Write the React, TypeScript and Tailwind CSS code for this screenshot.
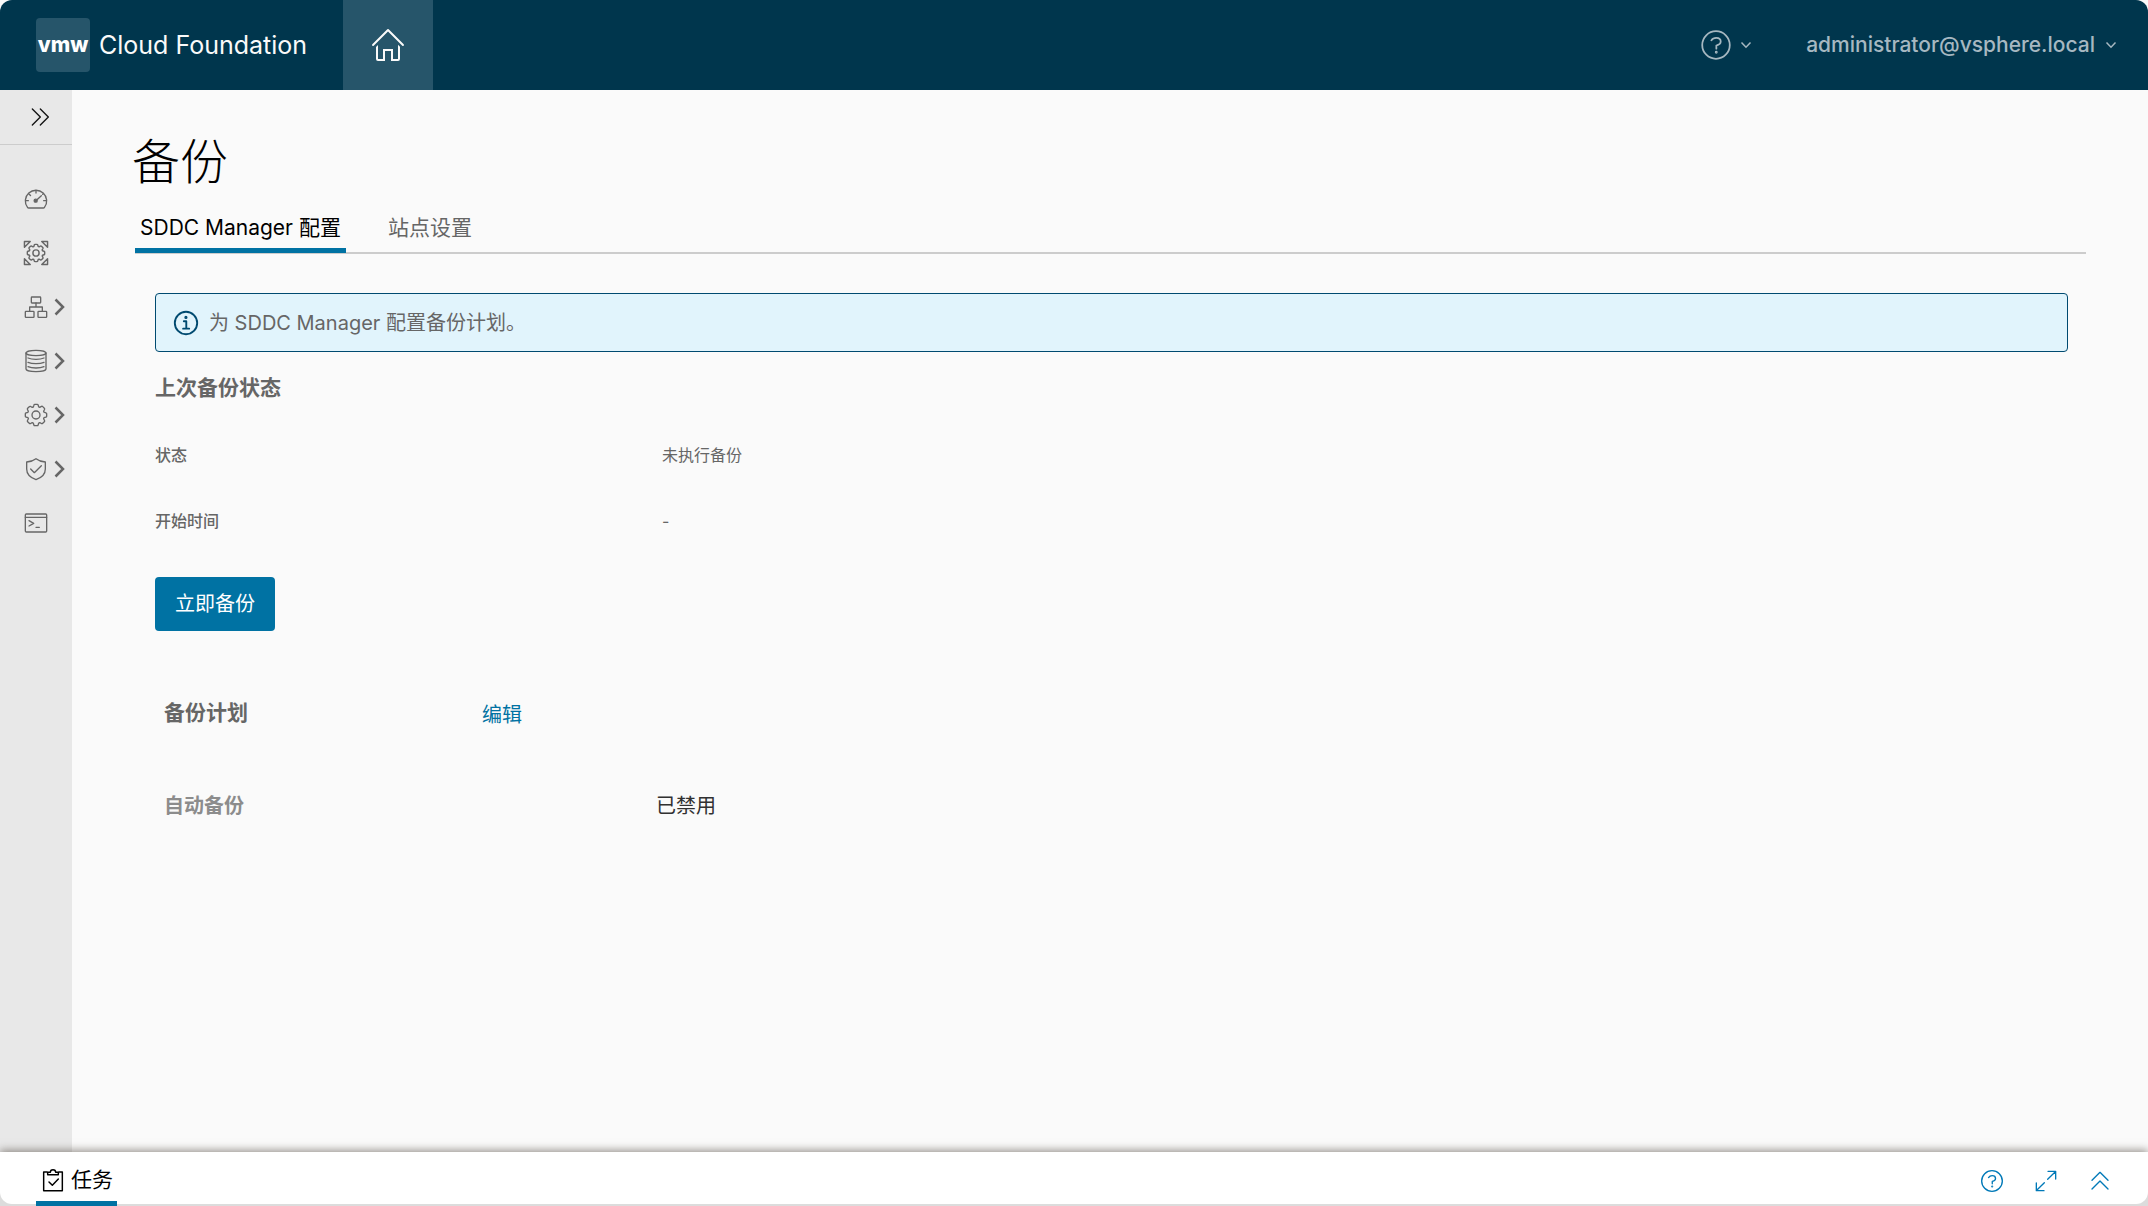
import { ReactNode } from "react"

interface IconProps {
  className?: string
  strokeWidth?: number
  children: ReactNode
}

const Icon = ({ className = "h-6 w-6", strokeWidth = 2, children }: IconProps) => (
  <svg
    viewBox="0 0 36 36"
    className={`shrink-0 ${className}`}
    fill="none"
    stroke="currentColor"
    strokeWidth={strokeWidth}
    strokeLinecap="round"
    strokeLinejoin="round"
    aria-hidden="true"
  >
    {children}
  </svg>
)

const COG_PATH =
  "M32.8,14.7L30,13.8l-0.6-1.5l1.4-2.6c0.3-0.6,0.2-1.4-0.3-1.9l-2.4-2.4c-0.5-0.5-1.3-0.6-1.9-0.3l-2.6,1.4l-1.5-0.6l-0.9-2.8C21,2.5,20.4,2,19.7,2h-3.4c-0.7,0-1.3,0.5-1.4,1.2L14,6c-0.6,0.1-1.1,0.3-1.6,0.6L9.8,5.2C9.2,4.9,8.4,5,7.9,5.5L5.5,7.9C5,8.4,4.9,9.2,5.2,9.8l1.3,2.5c-0.2,0.5-0.4,1.1-0.6,1.6l-2.8,0.9C2.5,15,2,15.6,2,16.3v3.4c0,0.7,0.5,1.3,1.2,1.5L6,22.1l0.6,1.5l-1.4,2.6c-0.3,0.6-0.2,1.4,0.3,1.9l2.4,2.4c0.5,0.5,1.3,0.6,1.9,0.3l2.6-1.4l1.5,0.6l0.9,2.9c0.2,0.6,0.8,1.1,1.5,1.1h3.4c0.7,0,1.3-0.5,1.5-1.1l0.9-2.9l1.5-0.6l2.6,1.4c0.6,0.3,1.4,0.2,1.9-0.3l2.4-2.4c0.5-0.5,0.6-1.3,0.3-1.9l-1.4-2.6l0.6-1.5l2.9-0.9c0.6-0.2,1.1-0.8,1.1-1.5v-3.4C34,15.6,33.5,14.9,32.8,14.7z"

const HomeIcon = () => (
  <svg viewBox="0 0 36 36" className="h-9 w-9" fill="currentColor" aria-hidden="true">
    <path d="M33.71,17.29l-15-15a1,1,0,0,0-1.41,0l-15,15a1,1,0,0,0,1.41,1.41L18,4.41,32.29,18.71a1,1,0,0,0,1.41-1.41Z" />
    <path d="M28,32h-5V22H13V32H8V18L6,20V32a2,2,0,0,0,2,2h7V24h6V34h7a2,2,0,0,0,2-2V19.76l-2-2Z" />
  </svg>
)

const HelpIcon = ({ className }: { className?: string }) => (
  <Icon className={className}>
    <circle cx="18" cy="18" r="15.5" />
    <path d="M12.8 12.8C14 11 16 10 18.3 10c2.9 0 5 1.6 5 4.2 0 2.9-2.4 3.9-4.9 4.5v3.4" />
    <circle cx="18.3" cy="26.2" r="0.6" fill="currentColor" />
  </Icon>
)

const InfoIcon = () => (
  <Icon className="h-[26px] w-[26px]" strokeWidth={2.6}>
    <circle cx="18" cy="18" r="15.5" />
    <path d="M15 15.5h3.4v10M14 25.8h8.4" />
    <circle cx="17.9" cy="10.3" r="0.9" fill="currentColor" />
  </Icon>
)

const CaretDown = () => (
  <svg viewBox="0 0 12 8" className="h-2 w-3" fill="none" stroke="currentColor" strokeWidth="1.5" aria-hidden="true">
    <path d="M1.5 1.5 6 6.2l4.5-4.7" />
  </svg>
)

const DashboardIcon = () => (
  <Icon>
    <path d="M7 31.5h22a2 2 0 0 0 1.7-.9A16 16 0 1 0 5.3 30.6a2 2 0 0 0 1.7.9Z" />
    <path d="M18 5v4M2.5 20.5h4M29.5 20.5h4M7 10l2.8 2.8M29 10l-1 1" />
    <path d="m19.5 19 6.5-6" />
    <circle cx="17.5" cy="20.5" r="2.3" fill="currentColor" />
  </Icon>
)

const PoolIcon = () => (
  <Icon className="h-[26px] w-[26px]" strokeWidth={2}>
    <g transform="translate(4.5 4.5) scale(0.75)">
      <path d={COG_PATH} strokeWidth={2.6} />
    </g>
    <circle cx="18" cy="18" r="4.3" />
    <path d="M2 10V2h8ZM26 2h8v8ZM34 26v8h-8ZM10 34H2v-8Z" />
  </Icon>
)

const NetworkIcon = () => (
  <Icon>
    <rect x="11" y="3" width="14" height="9" rx="1" />
    <rect x="2" y="24.5" width="13" height="9" rx="1" />
    <rect x="21" y="24.5" width="13" height="9" rx="1" />
    <path d="M18 12v6M8.5 24v-6h19v6" />
  </Icon>
)

const StorageIcon = () => (
  <Icon>
    <ellipse cx="18" cy="6" rx="15" ry="4" />
    <path d="M3 6v24c0 2 6 4 15 4s15-2 15-4V6" />
    <path d="M6 13.5c3 1.3 7 2 12 2s9-.7 12-2M6 20c3 1.3 7 2 12 2s9-.7 12-2M6 26.500c3 1.3 7 2 12 2s9-.7 12-2" />
  </Icon>
)

const CogIcon = () => (
  <Icon>
    <path d={COG_PATH} />
    <circle cx="18" cy="18" r="6" />
  </Icon>
)

const ShieldIcon = () => (
  <Icon>
    <path d="M18 2.5c3.5 2.7 8 4.5 14 5V18c0 7.5-5.5 13-14 16C9.5 31 4 25.5 4 18V7.5c6-.5 10.500-2.3 14-5Z" />
    <path d="m10 18 5.500 5.500L26 13" />
  </Icon>
)

const TerminalIcon = () => (
  <Icon>
    <rect x="2" y="4.5" width="32" height="27" rx="1.5" />
    <path d="M2 9.5h32M7.5 14.5l7 4-7 4M18 24.5h5" />
  </Icon>
)

const TaskIcon = () => (
  <Icon strokeWidth={2.2}>
    <path d="M9 6H4v28h28V6h-5" />
    <path d="M10 10V6.5h4a4 4 0 0 1 8 0h4V10Z" />
    <path d="m12 21 5 5 9-9.5" />
  </Icon>
)

const navItems = [
  { label: "仪表板", icon: <DashboardIcon />, expandable: false },
  { label: "解决方案", icon: <PoolIcon />, expandable: false },
  { label: "清单", icon: <NetworkIcon />, expandable: true },
  { label: "存储", icon: <StorageIcon />, expandable: true },
  { label: "管理", icon: <CogIcon />, expandable: true },
  { label: "安全", icon: <ShieldIcon />, expandable: true },
  { label: "开发人员中心", icon: <TerminalIcon />, expandable: false },
]

const statusRows = [
  { label: "状态", value: "未执行备份" },
  { label: "开始时间", value: "-" },
]

const Header = () => (
  <header className="flex h-[90px] items-center rounded-t-xl bg-[#00364d] text-[#fafafa]">
    <a href="#" className="flex items-center gap-[9px] pl-9">
      <span className="flex h-[54px] w-[54px] items-center justify-center rounded bg-[#26556a] text-[21px] leading-6 font-extrabold text-white">
        vmw
      </span>
      <span className="text-[25px] leading-8">Cloud Foundation</span>
    </a>
    <a href="#" aria-label="主页" className="ml-9 flex h-full w-[90px] items-center justify-center bg-[#26556a]">
      <HomeIcon />
    </a>
    <div className="ml-auto flex items-center gap-[54px] pr-[31px] text-[#a6b8c1]">
      <button aria-label="帮助" className="flex items-center gap-2">
        <HelpIcon className="h-8 w-8" />
        <CaretDown />
      </button>
      <button className="flex items-center gap-2.5 text-[21px] leading-8 font-medium">
        administrator@vsphere.local
        <CaretDown />
      </button>
    </div>
  </header>
)

const Sidebar = () => (
  <nav className="w-[72px] shrink-0 bg-[#e8e8e8] text-[#666]">
    <button aria-label="展开" className="flex h-[55px] w-full items-center border-b border-[#ccc] pl-[29px] text-[#111]">
      <Icon>
        <path d="m5 6 12 12L5 30M17 6l12 12-12 12" />
      </Icon>
    </button>
    <ul className="pt-[27px]">
      {navItems.map((item) => (
        <li key={item.label}>
          <a href="#" aria-label={item.label} className="flex h-[54px] items-center pl-[23px]">
            <span className="flex w-[26px] justify-center">{item.icon}</span>
            {item.expandable && (
              <svg viewBox="0 0 12 18" className="ml-[5px] h-[18px] w-3" fill="none" stroke="currentColor" strokeWidth="2.5" aria-hidden="true">
                <path d="m1.5 1.5 7.5 7.5-7.5 7.5" />
              </svg>
            )}
          </a>
        </li>
      ))}
    </ul>
  </nav>
)

const Footer = () => (
  <footer className="relative bg-[#dcdcdc] pb-[2px] shadow-[0_-2px_8px_rgba(60,50,40,0.5)]">
    <div className="flex h-[52px] items-center justify-between rounded-b-xl bg-white px-9">
      <button className="relative flex h-full items-center gap-1.5 pt-1 pr-1 pl-[5px] text-[21px] leading-8 text-black">
        <TaskIcon />
        任务
        <span className="absolute inset-x-0 -bottom-[2px] h-[5px] bg-[#0072a3]" />
      </button>
      <div className="flex items-center gap-[30px] pt-[5px] text-[#0079b8]">
        <button aria-label="帮助">
          <HelpIcon className="h-6 w-6" />
        </button>
        <button aria-label="最大化">
          <Icon>
            <path d="M21 3.5h11.500V15M32 4 20.5 15.5M15 32.5H3.5V21M4 32l11.5-11.5" />
          </Icon>
        </button>
        <button aria-label="展开任务">
          <Icon>
            <path d="M6 17 18 5l12 12M6 30l12-12 12 12" />
          </Icon>
        </button>
      </div>
    </div>
  </footer>
)

export default function App() {
  return (
    <div className="flex min-h-screen flex-col bg-[#fafafa] font-['Inter','Noto_Sans_CJK_SC',sans-serif] text-[#666]">
      <Header />
      <div className="flex flex-1">
        <Sidebar />
        <main className="min-w-0 flex-1 pr-[62px] pl-[60px]">
          <h1 className="pt-9 text-5xl leading-[72px] font-light text-black">备份</h1>
          <div role="tablist" className="ml-[3px] flex h-14 gap-[34px] border-b-2 border-[#ccc] text-[21px] leading-8">
            <button role="tab" aria-selected="true" className="relative px-[5px] pt-1.5 text-black">
              SDDC Manager 配置
              <span className="absolute inset-x-0 -bottom-px h-[5px] bg-[#0072a3]" />
            </button>
            <button role="tab" aria-selected="false" className="px-2 pt-1.5">
              站点设置
            </button>
          </div>

          <section className="mt-[39px] mr-[18px] ml-[23px]">
            <div className="flex h-[59px] items-center gap-2.5 rounded border border-[#004a70] bg-[#e1f4fc] px-[17px]">
              <span className="text-[#004a70]">
                <InfoIcon />
              </span>
              <p className="text-xl">为 SDDC Manager 配置备份计划。</p>
            </div>

            <h2 className="mt-5 text-[21px] leading-8 font-bold">上次备份状态</h2>
            <dl className="mt-[18px]">
              {statusRows.map((row) => (
                <div key={row.label} className="flex h-[66px] items-center text-base">
                  <dt className="w-[507px] font-medium">{row.label}</dt>
                  <dd>{row.value}</dd>
                </div>
              ))}
            </dl>
            <button className="mt-[23px] h-[54px] rounded bg-[#0072a3] px-5 text-xl text-white">立即备份</button>
          </section>

          <section className="mt-16 ml-8">
            <div className="flex h-9 items-center">
              <h2 className="w-[318px] text-[21px] leading-8 font-bold">备份计划</h2>
              <a href="#" className="pt-1 text-xl text-[#0072a3]">
                编辑
              </a>
            </div>
            <dl className="mt-[57px] flex h-9 items-center text-xl">
              <dt className="w-[492px] font-bold text-[#8c8c8c]">自动备份</dt>
              <dd className="text-[#313131]">已禁用</dd>
            </dl>
          </section>
        </main>
      </div>
      <Footer />
    </div>
  )
}
